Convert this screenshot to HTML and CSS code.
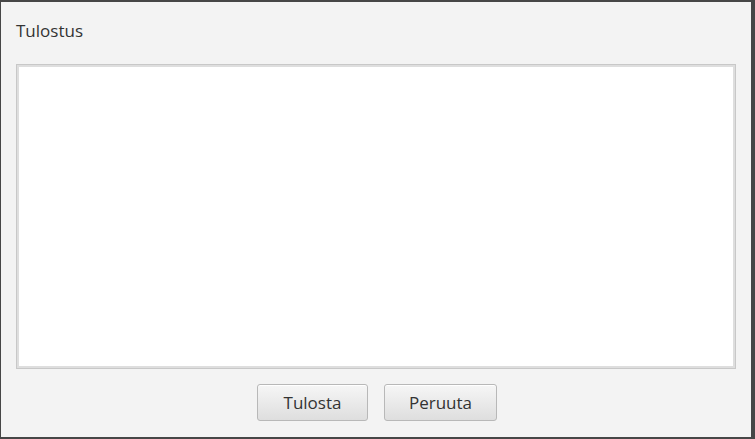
FILE: index.html
```html
<!DOCTYPE html>
<html lang="fi">
<head>
<meta charset="utf-8">
<title>Tulostus</title>
<link rel="stylesheet" href="styles.css">
</head>
<body>
<div class="window">
  <div class="title">Tulostus</div>
  <div class="textarea"></div>
  <div class="buttons">
    <button class="btn btn-print">Tulosta</button>
    <button class="btn btn-cancel">Peruuta</button>
  </div>
</div>
</body>
</html>
```
FILE: styles.css
```css
html, body {
  margin: 0;
  padding: 0;
  background: #464646;
  width: 755px;
  height: 439px;
  overflow: hidden;
}
.window {
  box-sizing: border-box;
  margin: 2px 0 0 1px;
  width: 750px;
  height: 435px;
  background: #f3f3f3;
  padding: 19px 15px 16px 15px;
  display: flex;
  flex-direction: column;
  font-family: "Open Sans", "Noto Sans", sans-serif;
  color: #333333;
}
.title {
  font-size: 17px;
  line-height: 20px;
  height: 20px;
  margin-bottom: 23px;
}
.textarea {
  box-sizing: border-box;
  height: 305px;
  background: #ffffff;
  border: 1px solid #c8c8c8;
  box-shadow: inset 2px 2px 0 #dedede, inset -2px -2px 0 #dedede;
}
.buttons {
  margin-top: 15px;
  padding-left: 2px;
  display: flex;
  justify-content: center;
  gap: 16px;
}
.btn {
  box-sizing: border-box;
  height: 37px;
  border: 1px solid #b8b8b8;
  border-radius: 3px;
  background: linear-gradient(#f6f6f6, #dedede);
  font-family: "Open Sans", "Noto Sans", sans-serif;
  font-size: 17px;
  color: #333333;
  padding: 0;
  box-shadow: inset 0 1px 0 #ffffff;
}
.btn-print { width: 111px; }
.btn-cancel { width: 113px; }
```
